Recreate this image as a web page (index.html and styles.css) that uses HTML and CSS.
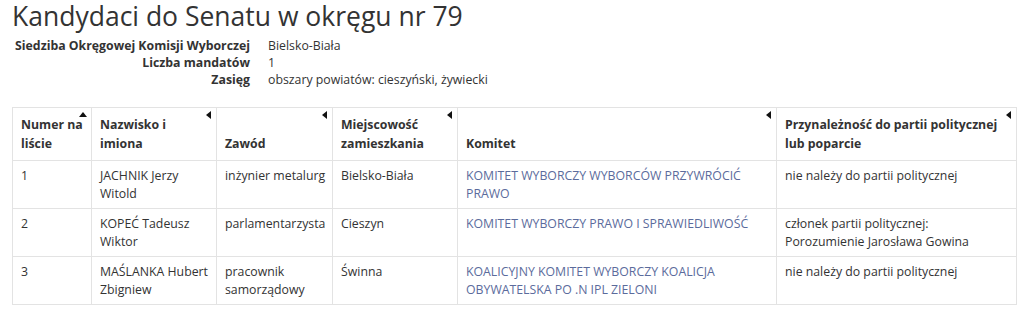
FILE: index.html
```html
<!DOCTYPE html>
<html lang="pl">
<head>
<meta charset="utf-8">
<title>Kandydaci do Senatu w okręgu nr 79</title>
<link rel="stylesheet" href="styles.css">
</head>
<body>
<div class="page">
  <h1 class="title">Kandydaci do Senatu w okręgu nr 79</h1>
  <dl class="info">
    <dt>Siedziba Okręgowej Komisji Wyborczej</dt><dd>Bielsko-Biała</dd>
    <dt>Liczba mandatów</dt><dd>1</dd>
    <dt>Zasięg</dt><dd>obszary powiatów: cieszyński, żywiecki</dd>
  </dl>
  <table class="candidates">
    <colgroup>
      <col class="c-num"><col class="c-name"><col class="c-job"><col class="c-city"><col class="c-com"><col class="c-party">
    </colgroup>
    <thead>
      <tr>
        <th><span class="sort sort-up"></span>Numer na liście</th>
        <th><span class="sort sort-left"></span>Nazwisko i imiona</th>
        <th><span class="sort sort-left"></span>Zawód</th>
        <th><span class="sort sort-left"></span>Miejscowość zamieszkania</th>
        <th><span class="sort sort-left"></span>Komitet</th>
        <th><span class="sort sort-left"></span>Przynależność do partii politycznej lub poparcie</th>
      </tr>
    </thead>
    <tbody>
      <tr>
        <td>1</td>
        <td>JACHNIK Jerzy Witold</td>
        <td>inżynier metalurg</td>
        <td>Bielsko-Biała</td>
        <td><a href="#">KOMITET WYBORCZY WYBORCÓW PRZYWRÓCIĆ PRAWO</a></td>
        <td>nie należy do partii politycznej</td>
      </tr>
      <tr>
        <td>2</td>
        <td>KOPEĆ Tadeusz Wiktor</td>
        <td>parlamentarzysta</td>
        <td>Cieszyn</td>
        <td><a href="#">KOMITET WYBORCZY PRAWO I SPRAWIEDLIWOŚĆ</a></td>
        <td>członek partii politycznej: Porozumienie Jarosława Gowina</td>
      </tr>
      <tr>
        <td>3</td>
        <td>MAŚLANKA Hubert Zbigniew</td>
        <td>pracownik samorządowy</td>
        <td>Świnna</td>
        <td><a href="#">KOALICYJNY KOMITET WYBORCZY KOALICJA OBYWATELSKA PO .N IPL ZIELONI</a></td>
        <td>nie należy do partii politycznej</td>
      </tr>
    </tbody>
  </table>
</div>
</body>
</html>
```

FILE: styles.css
```css
html, body {
  margin: 0;
  padding: 0;
  background: #fff;
}
body {
  font-family: "Open Sans", "Liberation Sans", sans-serif;
  font-size: 12.3px;
  color: #333;
}
.page {
  padding: 0 7px 0 12px;
}
.title {
  margin: 0 0 5px 0;
  font-size: 26.5px;
  font-weight: 400;
  line-height: 32px;
  color: #333;
}
.info {
  display: grid;
  grid-template-columns: 238px 1fr;
  column-gap: 18px;
  margin: 0 0 19px 0;
  line-height: 17px;
}
.info dt {
  font-weight: 700;
  text-align: right;
  white-space: nowrap;
}
.info dd {
  margin: 0;
}
.candidates {
  width: 100%;
  table-layout: fixed;
  border-collapse: collapse;
  border: 1px solid #e3e3e3;
}
.c-num { width: 79px; }
.c-name { width: 125px; }
.c-job { width: 116px; }
.c-city { width: 125px; }
.c-com { width: 319px; }
.c-party { width: auto; }
.candidates th,
.candidates td {
  border: 1px solid #e3e3e3;
  text-align: left;
}
.candidates th {
  position: relative;
  padding: 7px 6px 7px 8px;
  vertical-align: bottom;
  font-weight: 700;
  line-height: 19px;
}
.candidates td {
  padding: 6px 6px 5px 8px;
  vertical-align: top;
  line-height: 18px;
}
.candidates a {
  color: #5b6b9c;
  text-decoration: none;
}
.sort {
  position: absolute;
  width: 0;
  height: 0;
}
.sort-up {
  top: 4px;
  right: 4px;
  border-left: 4px solid transparent;
  border-right: 4px solid transparent;
  border-bottom: 5px solid #111;
}
.sort-left {
  top: 3px;
  right: 5px;
  border-top: 4px solid transparent;
  border-bottom: 4px solid transparent;
  border-right: 5px solid #111;
}
```
